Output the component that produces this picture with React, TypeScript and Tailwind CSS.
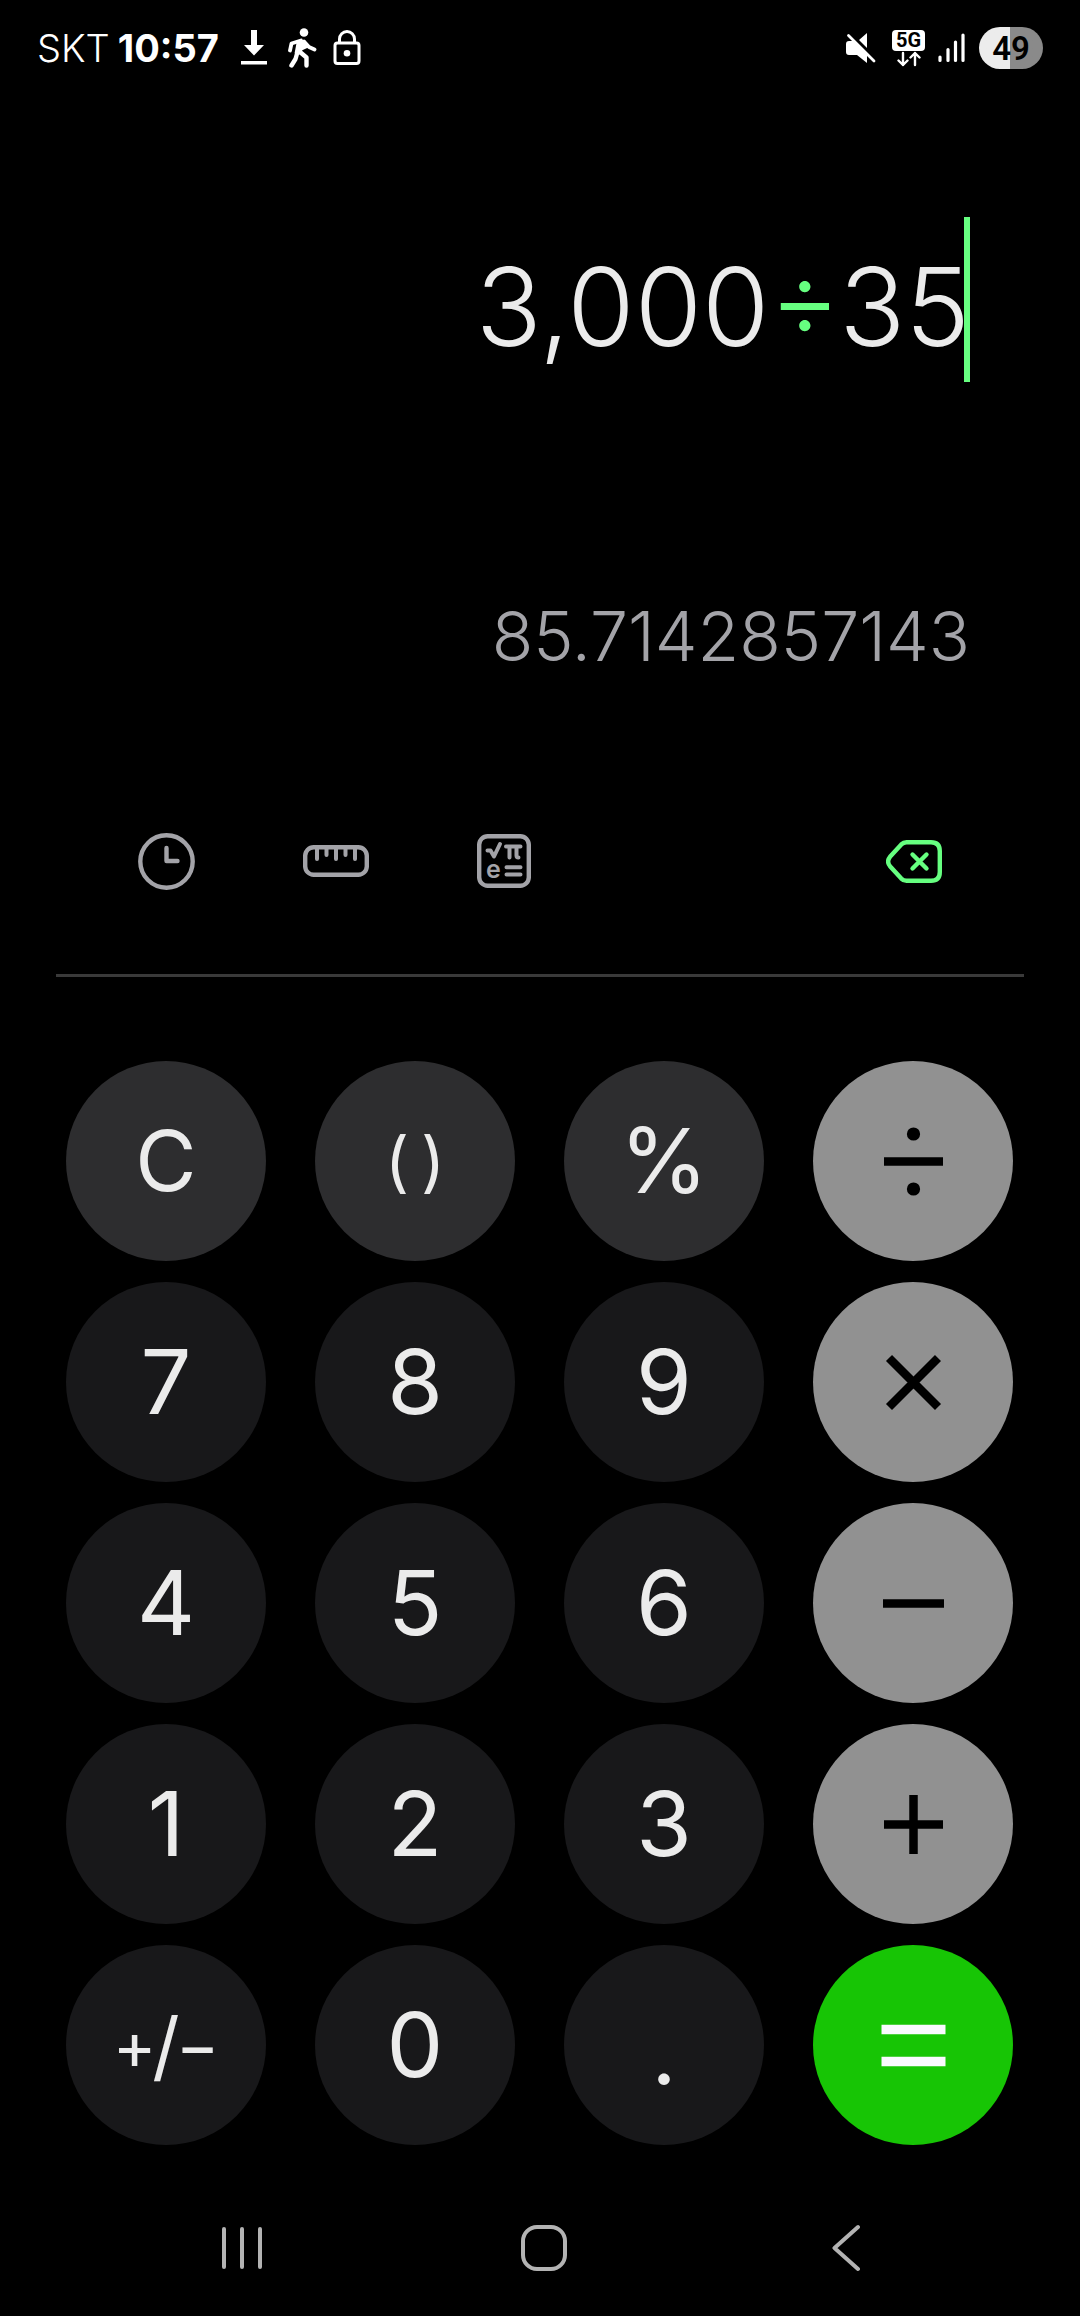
import React from 'react';

type KeyKind = 'digit' | 'function' | 'operator' | 'equals';

interface KeyDef {
  name: string;
  label: React.ReactNode;
  kind: KeyKind;
  size?: string;
}

const kindStyles: Record<KeyKind, string> = {
  digit: 'bg-[#18181a] text-[#ebebeb]',
  function: 'bg-[#2d2d2f] text-[#ebebeb]',
  operator: 'bg-[#919191] text-black',
  equals: 'bg-[#17c505] text-[#fafaff]',
};

const digit = (value: string): KeyDef => ({
  name: value,
  label: value,
  kind: 'digit',
  size: 'text-[90px]',
});

const keys: KeyDef[] = [
  { name: 'Clear', label: 'C', kind: 'function', size: 'text-[84px]' },
  {
    name: 'Parentheses',
    label: (
      <span className="flex gap-3">
        <span>(</span>
        <span>)</span>
      </span>
    ),
    kind: 'function',
    size: 'text-[66px]',
  },
  { name: 'Percent', label: '%', kind: 'function', size: 'text-[90px]' },
  { name: 'Divide', label: <DivideIcon />, kind: 'operator' },
  digit('7'),
  digit('8'),
  digit('9'),
  { name: 'Multiply', label: <OperatorIcon d="M13 13l49 49M62 13l-49 49" />, kind: 'operator' },
  digit('4'),
  digit('5'),
  digit('6'),
  { name: 'Subtract', label: <OperatorIcon d="M7 37.500h61" />, kind: 'operator' },
  digit('1'),
  digit('2'),
  digit('3'),
  { name: 'Add', label: <OperatorIcon d="M8 37.500h59M37.500 8v59" />, kind: 'operator' },
  {
    name: 'Plus or minus',
    label: (
      <span className="flex items-center">
        +<span className="-mx-1 text-[76px]">/</span>−
      </span>
    ),
    kind: 'digit',
    size: 'text-[66px]',
  },
  digit('0'),
  { name: 'Decimal point', label: '.', kind: 'digit', size: 'text-[108px] font-light' },
  {
    name: 'Equals',
    label: <OperatorIcon d="M5.500 21.500h64M5.500 53.500h64" strokeWidth={9.5} />,
    kind: 'equals',
  },
];

export default function App() {
  return (
    <div className="min-h-screen bg-black font-['Inter','Liberation_Sans',sans-serif] text-[#ebebeb]">
      <StatusBar />
      <main>
        <Display />
        <Toolbar />
        <hr className="mx-[56px] mt-[83px] h-[3px] border-0 bg-[#3a3a3a]" />
        <section
          aria-label="Keypad"
          className="mt-[84px] grid grid-cols-4 gap-x-[49px] gap-y-[21px] pl-[66px] pr-[67px]"
        >
          {keys.map((key) => (
            <Key key={key.name} {...key} />
          ))}
        </section>
      </main>
      <NavigationBar />
    </div>
  );
}

function Key({ name, label, kind, size = '' }: KeyDef) {
  return (
    <button
      type="button"
      aria-label={name}
      className={`flex aspect-square w-full items-center justify-center rounded-full leading-none ${size} ${kindStyles[kind]}`}
    >
      {label}
    </button>
  );
}

function OperatorIcon({ d, strokeWidth = 8.5 }: { d: string; strokeWidth?: number }) {
  return (
    <svg width="75" height="75" viewBox="0 0 75 75" fill="none" stroke="currentColor" strokeWidth={strokeWidth}>
      <path d={d} />
    </svg>
  );
}

function DivideIcon() {
  return (
    <svg width="75" height="75" viewBox="0 0 75 75" fill="currentColor">
      <path d="M8 33.300h59v8.500H8z" />
      <circle cx="37.500" cy="10" r="6.600" />
      <circle cx="37.500" cy="65" r="6.600" />
    </svg>
  );
}

function Display() {
  return (
    <section aria-label="Display" className="pr-[110px] pt-[121px]">
      <div className="relative flex h-[165px] items-end justify-end text-[109px] font-[350] leading-[151px]">
        <span>
          3,000<span className="text-[#66ff80]">÷</span>35
        </span>
        <span className="absolute right-0 top-0 h-full w-[6px] bg-[#66ff80]" />
      </div>
      <output className="mt-[204px] block text-right text-[68px] font-[350] leading-[100px] text-[#a3a3a8]">
        85.7142857143
      </output>
    </section>
  );
}

function Toolbar() {
  return (
    <div className="mt-[145px] flex h-[60px] items-center justify-between px-[138px] text-[#a3a3a8]">
      <div className="flex items-center gap-[108px]">
        <button type="button" aria-label="History">
          <svg width="57" height="57" viewBox="0 0 57 57" fill="none" stroke="currentColor" strokeWidth="4.400">
            <circle cx="28.500" cy="28.500" r="26.200" />
            <path d="M28.500 15v13h11" strokeLinecap="round" strokeLinejoin="round" />
          </svg>
        </button>
        <button type="button" aria-label="Unit converter">
          <svg width="66" height="32" viewBox="0 0 66 32" fill="none" stroke="currentColor" strokeWidth="4.400">
            <rect x="2.200" y="2.200" width="61.600" height="27.600" rx="8.500" />
            <path d="M14 3v11M23.500 3v7M33 3v11M42.500 3v7M52 3v11" strokeLinecap="round" strokeWidth="4" />
          </svg>
        </button>
        <button type="button" aria-label="Scientific mode">
          <svg width="54" height="54" viewBox="0 0 54 54" fill="none" stroke="currentColor" strokeWidth="4.400">
            <rect x="2.200" y="2.200" width="49.600" height="49.600" rx="8.500" />
            <g strokeLinecap="round" strokeLinejoin="round" strokeWidth="4">
              <path d="M10.500 16.500h3l3.500 6 6-12.500" />
              <path d="M29 12.500h14.500M32.500 13v10.500M39.500 13v8.500q0 2 2 2" />
              <path d="M29.500 33.200h14M29.500 40.500h14" />
            </g>
            <text
              x="16.500"
              y="43.500"
              textAnchor="middle"
              fill="currentColor"
              stroke="none"
              className="font-['Inter',sans-serif] text-[25px] font-semibold"
            >
              e
            </text>
          </svg>
        </button>
      </div>
      <button type="button" aria-label="Backspace" className="text-[#66ff80]">
        <svg
          width="56"
          height="43"
          viewBox="0 0 56 43"
          fill="none"
          stroke="currentColor"
          strokeWidth="4.400"
          strokeLinecap="round"
          strokeLinejoin="round"
        >
          <path d="M20.500 2.200H45q8.800 0 8.800 8.800v21q0 8.800-8.800 8.800H20.500q-3 0-5.200-2.200L4 26.200q-3.800-4.700 0-9.400L15.300 4.400q2.200-2.200 5.200-2.200Z" />
          <path d="M26.500 14.500l14 14M40.500 14.500l-14 14" />
        </svg>
      </button>
    </div>
  );
}

function StatusBar() {
  return (
    <header className="flex h-[96px] items-center justify-between px-[37px] text-white">
      <div className="flex items-center">
        <span className="text-[38px] font-[350] leading-none">SKT</span>
        <span className="ml-2 text-[38px] font-bold leading-none">10:57</span>
        {/* Download, activity and lock notifications */}
        <svg className="ml-[22px]" width="26" height="36" viewBox="0 0 26 36" fill="currentColor">
          <path d="M10 0h6v15h7L13 25.500 3 15h7zM0 31h26v3.500H0z" />
        </svg>
        <svg className="ml-[20px]" width="30" height="40" viewBox="0 0 30 40" fill="none" stroke="currentColor">
          <circle cx="17" cy="4.500" r="4.300" fill="currentColor" stroke="none" />
          <path d="M13.500 13l-2.500 13M15 14l3 7" strokeWidth="7" strokeLinejoin="round" />
          <path
            d="M14 12.500L4.500 15.500 3 22.500M17 13.500l5 5.500 5.500 2.500"
            strokeWidth="3.800"
            strokeLinecap="round"
            strokeLinejoin="round"
          />
          <path
            d="M10.500 24L8.500 31 4.500 37.500M13 24l6.500 5.500v8"
            strokeWidth="4.400"
            strokeLinecap="round"
            strokeLinejoin="round"
          />
        </svg>
        <svg
          className="ml-[16px]"
          width="28"
          height="36"
          viewBox="0 0 28 36"
          fill="none"
          stroke="currentColor"
          strokeWidth="3"
        >
          <rect x="2" y="13" width="24" height="20.500" rx="2.500" />
          <path d="M6.500 13V9a7.500 7.500 0 0 1 15 0v4" />
          <circle cx="14" cy="23.300" r="3.300" fill="currentColor" stroke="none" />
        </svg>
      </div>
      <div className="flex items-center">
        <svg width="30" height="32" viewBox="0 0 30 32" fill="currentColor">
          <path d="M0 12q0-3 3-3h5l13 13v9L11 23H3q-3 0-3-3zM13 8l8-7v15z" />
          <path d="M2.500 3.500L28 29" fill="none" stroke="currentColor" strokeWidth="2.800" strokeLinecap="round" />
        </svg>
        <div className="ml-[16px] flex w-[33px] flex-col items-center">
          <span className="w-full rounded-[4px] bg-white text-center font-['Roboto',sans-serif] text-[20px] font-bold leading-[21px] text-black">
            5G
          </span>
          <svg
            width="24"
            height="16"
            viewBox="0 0 24 16"
            fill="none"
            stroke="currentColor"
            strokeWidth="2.400"
            strokeLinecap="round"
            strokeLinejoin="round"
          >
            <path d="M6 2v12M1.500 9.500L6 14l4.500-4.500M18 14V2M13.500 6.500L18 2l4.500 4.500" />
          </svg>
        </div>
        <svg
          className="ml-[13px]"
          width="28"
          height="30"
          viewBox="0 0 28 30"
          fill="none"
          stroke="currentColor"
          strokeWidth="3.200"
          strokeLinecap="round"
        >
          <path d="M2 24v3.500M10 16.500v11M17.500 9v18.500M25 2v25.500" />
        </svg>
        <span className="ml-[13px] flex h-[42px] w-[64px] items-center justify-center rounded-full bg-linear-to-r from-[#ececec] from-49% to-[#8a8a8a] to-49% font-['Roboto',sans-serif] text-[33px] font-semibold leading-none text-black">
          49
        </span>
      </div>
    </header>
  );
}

function NavigationBar() {
  return (
    <nav className="mt-[78px] grid grid-cols-3 items-center justify-items-center pb-[43px] pl-[91px] pr-[83px] text-[#b3b3b3]">
      <button type="button" aria-label="Recent apps">
        <svg
          width="40"
          height="50"
          viewBox="0 0 40 50"
          fill="none"
          stroke="currentColor"
          strokeWidth="4"
          strokeLinecap="round"
        >
          <path d="M2 6v38M20 6v38M38 6v38" />
        </svg>
      </button>
      <button type="button" aria-label="Home">
        <svg width="46" height="50" viewBox="0 0 46 50" fill="none" stroke="currentColor" strokeWidth="4">
          <rect x="2" y="4" width="42" height="42" rx="14" />
        </svg>
      </button>
      <button type="button" aria-label="Back">
        <svg
          width="28"
          height="50"
          viewBox="0 0 28 50"
          fill="none"
          stroke="currentColor"
          strokeWidth="4"
          strokeLinecap="round"
          strokeLinejoin="round"
        >
          <path d="M26 4L2.500 25 26 46" />
        </svg>
      </button>
    </nav>
  );
}
